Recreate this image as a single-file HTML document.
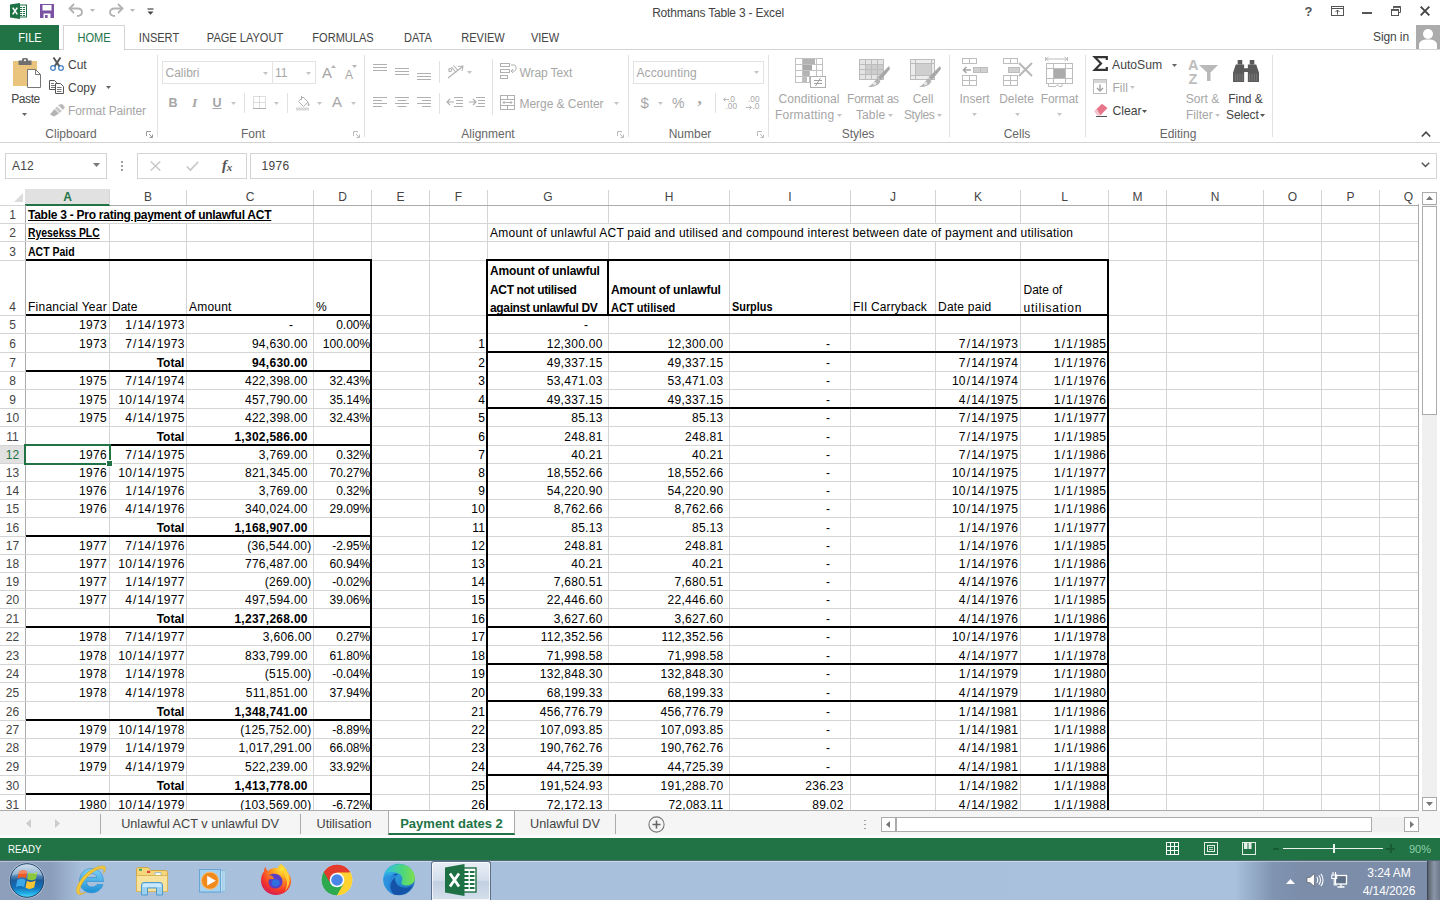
<!DOCTYPE html>
<html lang="en">
<head>
<meta charset="utf-8">
<title>Rothmans Table 3 - Excel</title>
<style>
*{box-sizing:border-box;margin:0;padding:0}
html,body{width:1440px;height:900px;overflow:hidden;background:#fff}
body{font-family:"Liberation Sans",sans-serif;font-size:12px;color:#444;position:relative}
.abs,.t,.g,.c,.r,.l,.hl,.vl,.th,.tv{position:absolute}
.t{white-space:pre;line-height:16px;height:16px}
svg{position:absolute;overflow:visible}
/* ribbon */
.dis{color:#a6a6a6}
.en{color:#444}
.glabel{position:absolute;top:127px;height:15px;line-height:15px;color:#666;font-size:12px;text-align:center;white-space:pre}
.gsep{position:absolute;top:55px;height:82px;width:1px;background:#e1e1e1}
.tab{position:absolute;top:30px;height:16px;line-height:16px;font-size:12px;color:#444;white-space:pre;transform:translateX(-50%) scaleX(.92)}
/* grid */
#sheet{position:absolute;left:0;top:189px;width:1419px;height:622px;overflow:hidden;background:#fff}
.hl{left:25px;height:1px;background:#d4d4d4;width:1394px}
.vl{top:0;width:1px;background:#d4d4d4;height:622px}
.th{height:2px;background:#000}
.tv{width:2px;background:#000}
.ch{position:absolute;top:1px;height:15px;line-height:15px;text-align:center;color:#444;font-size:12px}
.rh{position:absolute;left:0;width:25px;text-align:center;color:#444;font-size:12px;height:16px;line-height:16px}
.c{white-space:pre;height:16px;line-height:16px;color:#000;font-size:12px}
.r{white-space:pre;height:16px;line-height:16px;color:#000;font-size:12px;text-align:right}
.b{font-weight:bold;transform-origin:0 50%}
.n{letter-spacing:.28px}
i{font-style:normal;padding:0 .85px}
</style>
</head>
<body>
<!-- ===== title bar ===== -->
<div class="abs" id="titlebar" style="left:0;top:0;width:1440px;height:25px;background:#fff"></div>
<svg style="left:10px;top:3px" width="17" height="16" viewBox="0 0 17 16">
  <rect x="8" y="2" width="8.5" height="12" fill="#fff" stroke="#1e7145" stroke-width="1"/>
  <g stroke="#1e7145" stroke-width="1"><path d="M10 4.5h5M10 6.5h5M10 8.5h5M10 10.5h5M10 12.5h5"/><path d="M12.5 3v10" stroke="#fff" stroke-width=".8"/></g>
  <path d="M0 1.6 L10 0 V16 L0 14.4Z" fill="#1e7145"/>
  <path d="M2.7 4.6 L7.3 11.4 M7.3 4.6 L2.7 11.4" stroke="#fff" stroke-width="1.6"/>
</svg>
<svg style="left:40px;top:4px" width="14" height="14" viewBox="0 0 14 14">
  <rect x="0" y="0" width="14" height="14" fill="#7b51a3"/>
  <rect x="2.5" y="1" width="9" height="5.5" fill="#fff"/>
  <rect x="3.5" y="9.5" width="7" height="4.5" fill="#fff"/>
  <rect x="5" y="11" width="2.6" height="3" fill="#7b51a3"/>
</svg>
<svg style="left:68px;top:3px" width="16" height="15" viewBox="0 0 16 15">
  <path d="M1.5 5.5 H9.5 C12.5 5.5 14 7.3 14 9.3 C14 11.6 12.2 13 9 13" fill="none" stroke="#b2b2b2" stroke-width="1.8"/>
  <path d="M6 1 L1.5 5.5 L6 10" fill="none" stroke="#b2b2b2" stroke-width="1.8"/>
</svg>
<svg style="left:89.5px;top:9px" width="5" height="3" viewBox="0 0 5 3"><path d="M0 0H5L2.5 3Z" fill="#b8b8b8"/></svg>
<svg style="left:108px;top:3px" width="16" height="15" viewBox="0 0 16 15">
  <path d="M14.5 5.5 H6.5 C3.5 5.5 2 7.3 2 9.3 C2 11.6 3.8 13 7 13" fill="none" stroke="#b2b2b2" stroke-width="1.8"/>
  <path d="M10 1 L14.5 5.5 L10 10" fill="none" stroke="#b2b2b2" stroke-width="1.8"/>
</svg>
<svg style="left:129.5px;top:9px" width="5" height="3" viewBox="0 0 5 3"><path d="M0 0H5L2.5 3Z" fill="#b8b8b8"/></svg>
<svg style="left:147px;top:8px" width="7" height="7" viewBox="0 0 7 7"><path d="M0.5 1H6.5" stroke="#444" stroke-width="1.2"/><path d="M0.5 3.5H6.5L3.5 6.8Z" fill="#444"/></svg>
<div class="t" style="left:520px;width:396px;top:5px;text-align:center;font-size:12px;letter-spacing:-.2px;color:#444">Rothmans Table 3 - Excel</div>
<!-- window controls -->
<div class="t" style="left:1303.500px;top:3.500px;width:10px;text-align:center;font-size:13px;font-weight:bold;color:#555">?</div>
<svg style="left:1331px;top:6px" width="13" height="10" viewBox="0 0 13 10"><rect x=".5" y=".5" width="12" height="9" fill="none" stroke="#555"/><path d="M.5 2.500H12.500" stroke="#555"/><path d="M6.500 4v4.500M4.500 6L6.500 4L8.500 6" fill="none" stroke="#555" stroke-width="1"/></svg>
<div class="abs" style="left:1362px;top:12px;width:10px;height:2px;background:#555"></div>
<svg style="left:1391px;top:6px" width="10" height="10" viewBox="0 0 10 10"><path d="M2.500 2.500V.5H9.500V6.500H7.500" fill="none" stroke="#555"/><path d="M2.500 1.200H9.500" stroke="#555" stroke-width="1.400"/><rect x=".5" y="3.500" width="7" height="6" fill="none" stroke="#555"/><path d="M.5 4.200H7.500" stroke="#555" stroke-width="1.400"/></svg>
<svg style="left:1420px;top:6px" width="10" height="10" viewBox="0 0 10 10"><path d="M.7.7L9.3 9.3M9.3.7L.7 9.3" stroke="#444" stroke-width="1.9"/></svg>
<!-- ===== tab row ===== -->
<div class="abs" style="left:0;top:49px;width:1440px;height:1px;background:#d4d4d4"></div>
<div class="abs" style="left:0;top:25px;width:59px;height:25px;background:#217346"></div>
<div class="tab" style="left:29.5px;color:#fff">FILE</div>
<div class="abs" style="left:63px;top:25px;width:62px;height:25px;background:#fff;border:1px solid #d4d4d4;border-bottom:none"></div>
<div class="tab" style="left:93.5px;color:#217346">HOME</div>
<div class="tab" style="left:158.5px">INSERT</div>
<div class="tab" style="left:245px">PAGE LAYOUT</div>
<div class="tab" style="left:343px">FORMULAS</div>
<div class="tab" style="left:418px">DATA</div>
<div class="tab" style="left:482.5px">REVIEW</div>
<div class="tab" style="left:545px">VIEW</div>
<div class="t" style="left:1373px;top:29px;font-size:12px;color:#444;letter-spacing:-.1px">Sign in</div>
<div class="abs" style="left:1416px;top:25px;width:24px;height:24px;background:#ababab;overflow:hidden">
  <svg style="left:0;top:0" width="24" height="24" viewBox="0 0 24 24"><circle cx="12" cy="9" r="5" fill="#fff"/><path d="M3 24V20C3 16.5 6 14.5 12 14.5S21 16.5 21 20V24Z" fill="#fff"/></svg>
</div>
<!-- ===== ribbon ===== -->
<div class="abs" style="left:0;top:142px;width:1440px;height:1px;background:#d4d4d4"></div>
<div class="gsep" style="left:157px"></div><div class="gsep" style="left:364px"></div><div class="gsep" style="left:628px"></div><div class="gsep" style="left:768px"></div><div class="gsep" style="left:949px"></div><div class="gsep" style="left:1085px"></div><div class="gsep" style="left:1272px"></div>
<div class="glabel" style="left:31px;width:80px">Clipboard</div>
<div class="glabel" style="left:213px;width:80px">Font</div>
<div class="glabel" style="left:448px;width:80px">Alignment</div>
<div class="glabel" style="left:650px;width:80px">Number</div>
<div class="glabel" style="left:818px;width:80px">Styles</div>
<div class="glabel" style="left:977px;width:80px">Cells</div>
<div class="glabel" style="left:1138px;width:80px">Editing</div>
<!-- dialog launchers -->
<svg class="dl" style="left:146px;top:131px" width="7" height="7" viewBox="0 0 7 7"><path d="M.5 5V.5H5" fill="none" stroke="#999"/><path d="M3 3L6 6M6.5 3.5V6.5H3.5" fill="none" stroke="#999"/></svg>
<svg class="dl" style="left:353px;top:131px" width="7" height="7" viewBox="0 0 7 7"><path d="M.5 5V.5H5" fill="none" stroke="#bbb"/><path d="M3 3L6 6M6.5 3.5V6.5H3.5" fill="none" stroke="#bbb"/></svg>
<svg class="dl" style="left:617px;top:131px" width="7" height="7" viewBox="0 0 7 7"><path d="M.5 5V.5H5" fill="none" stroke="#bbb"/><path d="M3 3L6 6M6.5 3.5V6.5H3.5" fill="none" stroke="#bbb"/></svg>
<svg class="dl" style="left:757px;top:131px" width="7" height="7" viewBox="0 0 7 7"><path d="M.5 5V.5H5" fill="none" stroke="#bbb"/><path d="M3 3L6 6M6.5 3.5V6.5H3.5" fill="none" stroke="#bbb"/></svg>

<!-- Clipboard -->
<svg style="left:13px;top:57px" width="29" height="31" viewBox="0 0 29 31">
  <rect x="0" y="4" width="24" height="25" fill="#eac47c"/>
  <rect x="5.500" y="3.500" width="13" height="4.500" fill="#6f6f6f"/><rect x="9" y="1" width="6" height="4" rx="1.500" fill="#6f6f6f"/><circle cx="12" cy="3.200" r="1" fill="#fff"/>
  <path d="M14.500 12.500H22.500L27.500 17.500V30.500H14.500Z" fill="#fff" stroke="#777" stroke-width="1"/><path d="M22.500 12.500V17.500H27.500" fill="none" stroke="#777"/>
</svg>
<div class="t en" style="left:5px;width:41px;top:91px;text-align:center;letter-spacing:-.4px">Paste</div>
<svg style="left:22px;top:113px" width="5" height="3" viewBox="0 0 5 3"><path d="M0 0H5L2.5 3Z" fill="#666"/></svg>
<!-- cut -->
<svg style="left:50px;top:57px" width="14" height="14" viewBox="0 0 14 14">
  <path d="M3.500 .5L9.600 9.600M10.500 .5L4.400 9.600" stroke="#555" stroke-width="1.900" fill="none"/>
  <circle cx="3" cy="11" r="2.3" fill="none" stroke="#4a82c3" stroke-width="1.300"/><circle cx="11" cy="11" r="2.3" fill="none" stroke="#4a82c3" stroke-width="1.300"/>
</svg>
<div class="t en" style="left:68px;top:57px;font-size:12px">Cut</div>
<!-- copy -->
<svg style="left:49px;top:80px" width="15" height="14" viewBox="0 0 15 14">
  <path d="M.5 .5H5.5L7.5 2.5V9.5H.5Z" fill="#fff" stroke="#555"/><path d="M2 3.5H5M2 5.5H6M2 7.5H6" stroke="#555" stroke-width=".8"/>
  <path d="M6.5 3.5H11.5L14.5 6.5V13.5H6.5Z" fill="#fff" stroke="#555"/><path d="M8 7.5H12.5M8 9.5H12.5M8 11.5H12.5" stroke="#555" stroke-width=".8"/>
</svg>
<div class="t en" style="left:68px;top:80px;font-size:12px">Copy</div>
<svg style="left:105.5px;top:86px" width="5" height="3" viewBox="0 0 5 3"><path d="M0 0H5L2.5 3Z" fill="#666"/></svg>
<!-- format painter -->
<svg style="left:50px;top:104px" width="15" height="13" viewBox="0 0 15 13">
  <path d="M8 1L12 0L15 3L13 6Z" fill="#b9b9b9"/><path d="M7 2.5L12 7L9.5 9L5 4.5Z" fill="#c8c8c8"/><path d="M4.5 5L9 9.5L4 12.5L0 10.5Z" fill="#b4b4b4"/>
</svg>
<div class="t dis" style="left:68px;top:103px;letter-spacing:-.1px">Format Painter</div>

<!-- Font -->
<div class="abs" style="left:162px;top:61px;width:111px;height:23px;border:1px solid #e3e3e3;background:#fff"></div>
<div class="abs" style="left:272px;top:61px;width:44px;height:23px;border:1px solid #e3e3e3;background:#fff"></div>
<div class="t dis" style="left:165.5px;top:65px">Calibri</div>
<div class="t dis" style="left:275px;top:65px">11</div>
<svg style="left:262.5px;top:71.5px" width="5" height="3" viewBox="0 0 5 3"><path d="M0 0H5L2.5 3Z" fill="#c4c4c4"/></svg>
<svg style="left:305.5px;top:71.5px" width="5" height="3" viewBox="0 0 5 3"><path d="M0 0H5L2.5 3Z" fill="#c4c4c4"/></svg>
<div class="t dis" style="left:322px;top:65px;font-size:15px">A</div>
<svg style="left:330.5px;top:64.5px" width="5" height="3" viewBox="0 0 5 3"><path d="M0 3H5L2.5 0Z" fill="#b4b4b4"/></svg>
<div class="t dis" style="left:345px;top:67px;font-size:12px">A</div>
<svg style="left:352px;top:64.5px" width="5" height="3" viewBox="0 0 5 3"><path d="M0 0H5L2.5 3Z" fill="#b4b4b4"/></svg>
<div class="t dis" style="left:168.5px;top:95px;font-weight:bold;font-size:12.5px">B</div>
<div class="t dis" style="left:192px;top:95px;font-style:italic;font-weight:bold;font-family:'Liberation Serif',serif;font-size:13.5px">I</div>
<div class="t dis" style="left:212.5px;top:95px;font-size:12.5px;font-weight:bold;text-decoration:underline">U</div>
<svg style="left:231px;top:101.5px" width="5" height="3" viewBox="0 0 5 3"><path d="M0 0H5L2.5 3Z" fill="#c4c4c4"/></svg>
<div class="abs" style="left:244px;top:93px;width:1px;height:20px;background:#e1e1e1"></div>
<svg style="left:253px;top:96px" width="13" height="13" viewBox="0 0 13 13"><rect x=".5" y=".5" width="12" height="12" fill="none" stroke="#bdbdbd" stroke-dasharray="1 1"/><path d="M6.500 .5V12.500M.5 6.500H12.500" stroke="#bdbdbd" stroke-dasharray="1 1"/><path d="M0 12.500H13" stroke="#b0b0b0"/></svg>
<svg style="left:273.5px;top:101.5px" width="5" height="3" viewBox="0 0 5 3"><path d="M0 0H5L2.5 3Z" fill="#c4c4c4"/></svg>
<div class="abs" style="left:287px;top:93px;width:1px;height:20px;background:#e1e1e1"></div>
<svg style="left:295px;top:95px" width="16" height="16" viewBox="0 0 16 16">
  <path d="M3.5 6.5L8 2L13 7L8.5 11.5Z" fill="#fff" stroke="#b0b0b0"/><path d="M6.5 .8V5" stroke="#b0b0b0"/><path d="M13 7C14.5 8.8 15 9.8 14.2 10.8C13.4 11.5 12.2 10.8 13 7Z" fill="#b0b0b0"/>
  <rect x="1" y="12.5" width="13" height="3" fill="#d9d9d9"/>
</svg>
<svg style="left:317px;top:101.5px" width="5" height="3" viewBox="0 0 5 3"><path d="M0 0H5L2.5 3Z" fill="#c4c4c4"/></svg>
<div class="t dis" style="left:332px;top:94px;font-size:15px">A</div>
<svg style="left:350.5px;top:101.5px" width="5" height="3" viewBox="0 0 5 3"><path d="M0 0H5L2.5 3Z" fill="#c4c4c4"/></svg>

<!-- Alignment -->
<svg style="left:373px;top:63px" width="60" height="20" viewBox="0 0 60 20"><g stroke="#b0b0b0" stroke-width="1">
 <path d="M0 1.5H14M0 4.5H14M0 7.5H14"/><path d="M22 5.5H36M22 8.5H36M22 11.5H36"/><path d="M44 10.5H58M44 13.5H58M44 16.5H58"/></g></svg>
<div class="abs" style="left:439px;top:61px;width:1px;height:22px;background:#e1e1e1"></div>
<svg style="left:447px;top:64px" width="18" height="15" viewBox="0 0 18 15"><g fill="none" stroke="#b0b0b0" stroke-width="1.1">
 <path d="M1 14L15 3"/><path d="M11 2.5L16 2L15 7"/><path d="M2.5 4.5C1 6 2 8 3.5 7.5C5 7 5 5 3.5 4.5ZM4.5 3L9 8.5M6.5 1.5L11 6.5"/></g></svg>
<svg style="left:467px;top:70.5px" width="5" height="3" viewBox="0 0 5 3"><path d="M0 0H5L2.5 3Z" fill="#c4c4c4"/></svg>
<div class="abs" style="left:492px;top:59px;width:1px;height:56px;background:#e1e1e1"></div>
<svg style="left:500px;top:63px" width="17" height="16" viewBox="0 0 17 16"><g fill="none" stroke="#b0b0b0" stroke-width="1">
 <rect x=".5" y=".5" width="9" height="3"/><rect x=".5" y="6.5" width="9" height="3"/><rect x=".5" y="12.5" width="7" height="3"/>
 <path d="M11 2H14.5C16.5 2 16.5 8 14.5 8H11.5M13 6L11 8L13 10"/></g></svg>
<div class="t dis" style="left:519.5px;top:64.5px;letter-spacing:-.1px">Wrap Text</div>
<svg style="left:373px;top:97px" width="60" height="12" viewBox="0 0 60 12"><g stroke="#b0b0b0" stroke-width="1">
 <path d="M0 .5H14M0 3.5H9M0 6.5H14M0 9.5H9"/><path d="M22 .5H36M24.5 3.5H33.5M22 6.5H36M24.5 9.5H33.5"/><path d="M44 .5H58M49 3.5H58M44 6.5H58M49 9.5H58"/></g></svg>
<div class="abs" style="left:439px;top:93px;width:1px;height:21px;background:#e1e1e1"></div>
<svg style="left:447px;top:97px" width="39" height="12" viewBox="0 0 39 12"><g stroke="#b0b0b0" stroke-width="1" fill="none">
 <path d="M7 .5H16M9 3.5H16M9 6.5H16M7 9.5H16"/><path d="M0 5H7M3 2L0 5L3 8" stroke-width="1.2"/>
 <path d="M29 .5H38M31 3.5H38M31 6.5H38M29 9.5H38"/><path d="M22 5H29M26 2L29 5L26 8" stroke-width="1.2"/></g></svg>
<svg style="left:500px;top:95px" width="16" height="15" viewBox="0 0 16 15"><g fill="none" stroke="#b0b0b0" stroke-width="1">
 <rect x=".5" y=".5" width="14" height="14"/><path d="M.5 4.5H14.5M.5 10.5H14.5M7.5 .5V4.5M7.5 10.5V14.5"/><path d="M3 7.5H12M4.5 6L3 7.5L4.5 9M10.5 6L12 7.5L10.5 9"/></g></svg>
<div class="t dis" style="left:519.5px;top:95.5px;letter-spacing:-.05px">Merge &amp; Center</div>
<svg style="left:614px;top:101.5px" width="5" height="3" viewBox="0 0 5 3"><path d="M0 0H5L2.5 3Z" fill="#c4c4c4"/></svg>

<!-- Number -->
<div class="abs" style="left:633px;top:61px;width:131px;height:23px;border:1px solid #e3e3e3;background:#fff"></div>
<div class="t dis" style="left:636.5px;top:64.5px;letter-spacing:.1px">Accounting</div>
<svg style="left:754px;top:71px" width="5" height="3" viewBox="0 0 5 3"><path d="M0 0H5L2.5 3Z" fill="#c4c4c4"/></svg>
<div class="t dis" style="left:640.500px;top:95px;font-size:15px">$</div>
<svg style="left:658px;top:101.5px" width="5" height="3" viewBox="0 0 5 3"><path d="M0 0H5L2.5 3Z" fill="#c4c4c4"/></svg>
<div class="t dis" style="left:672px;top:95px;font-size:14px">%</div>
<div class="t dis" style="left:697.500px;top:90.500px;font-size:17px;font-weight:bold;font-family:'Liberation Serif',serif">,</div>
<div class="abs" style="left:715px;top:93px;width:1px;height:20px;background:#e1e1e1"></div>
<div class="t dis" style="left:728px;top:94.500px;font-size:8.300px;line-height:8px;height:8px;color:#a9a9a9">.0</div>
<div class="t dis" style="left:725.500px;top:102px;font-size:8.300px;line-height:8px;height:8px;color:#a9a9a9">.00</div>
<svg style="left:722.500px;top:97px" width="6" height="5" viewBox="0 0 6 5"><path d="M6 2.5H1M2.5 .5L.5 2.5L2.5 4.5" fill="none" stroke="#b0b0b0" stroke-width=".9"/></svg>
<div class="t dis" style="left:748px;top:94.500px;font-size:8.300px;line-height:8px;height:8px;color:#a9a9a9">.00</div>
<div class="t dis" style="left:752.500px;top:102px;font-size:8.300px;line-height:8px;height:8px;color:#a9a9a9">.0</div>
<svg style="left:745.500px;top:104.500px" width="6" height="5" viewBox="0 0 6 5"><path d="M0 2.5H5M3.5 .5L5.5 2.5L3.5 4.5" fill="none" stroke="#b0b0b0" stroke-width=".9"/></svg>
<!-- Styles -->
<svg style="left:795px;top:58px" width="31" height="30" viewBox="0 0 31 30">
  <g fill="none" stroke="#c2c2c2" stroke-width="1"><rect x=".5" y=".5" width="27" height="24"/><path d="M.5 6.5H27.5M.5 12.5H27.5M.5 18.5H27.5M7.5 .5V24.5M14.5 .5V24.5M21.5 .5V24.5"/></g>
  <rect x="8" y="1" width="12" height="5" fill="#b3b3b3"/><rect x="8" y="7" width="9" height="5" fill="#a9a9a9"/><rect x="8" y="13" width="6" height="5" fill="#b3b3b3"/><rect x="8" y="19" width="4" height="5" fill="#bdbdbd"/>
  <rect x="15.5" y="18.500" width="15" height="11" fill="#fff" stroke="#b0b0b0"/><path d="M19 22.5H27M19 25.500H27M25.500 20L20.5 28" stroke="#a0a0a0" stroke-width="1" fill="none"/>
</svg>
<div class="t dis" style="left:768px;width:82px;top:91px;text-align:center;letter-spacing:.1px">Conditional</div>
<div class="t dis" style="left:775px;top:107px;letter-spacing:.2px">Formatting</div>
<svg style="left:837px;top:113.500px" width="5" height="3" viewBox="0 0 5 3"><path d="M0 0H5L2.5 3Z" fill="#c4c4c4"/></svg>
<svg style="left:859px;top:59px" width="31" height="29" viewBox="0 0 31 29">
  <rect x="1" y="1" width="24" height="20" fill="#e4e4e4"/><rect x="7" y="6" width="18" height="10" fill="#cdcdcd"/>
  <g fill="none" stroke="#bcbcbc" stroke-width="1"><rect x=".5" y=".5" width="24" height="20"/><path d="M.5 5.5H24.5M.5 10.5H24.5M.5 15.500H24.5M6.500 .5V20.5M12.500 .5V20.5M18.500 .5V20.5"/></g>
  <path d="M30 7L31 10L22 21L18.500 18.500Z" fill="#a8a8a8"/><path d="M18 19L21.500 22C20 26 16 28 9 28C13 26 15 23 18 19Z" fill="#b4b4b4"/><circle cx="15.500" cy="24.500" r="1.800" fill="#e6e6e6"/>
</svg>
<div class="t dis" style="left:838px;width:70px;top:91px;text-align:center;letter-spacing:-.25px">Format as</div>
<div class="t dis" style="left:856px;top:107px;letter-spacing:.1px">Table</div>
<svg style="left:887.500px;top:113.500px" width="5" height="3" viewBox="0 0 5 3"><path d="M0 0H5L2.5 3Z" fill="#c4c4c4"/></svg>
<svg style="left:910px;top:59px" width="31" height="29" viewBox="0 0 31 29">
  <rect x="1" y="1" width="24" height="20" fill="#ececec"/><rect x="6" y="5" width="15" height="11" fill="#cfcfcf"/>
  <g fill="none" stroke="#bcbcbc" stroke-width="1"><rect x=".5" y=".5" width="24" height="20"/><path d="M.5 4.500H24.5M.5 16.500H24.5M5.500 .5V20.5M21.500 .5V20.5"/></g>
  <path d="M30 7L31 10L22 21L18.500 18.500Z" fill="#a8a8a8"/><path d="M18 19L21.500 22C20 26 16 28 9 28C13 26 15 23 18 19Z" fill="#b4b4b4"/><circle cx="15.500" cy="24.500" r="1.800" fill="#e6e6e6"/>
</svg>
<div class="t dis" style="left:898px;width:50px;top:91px;text-align:center">Cell</div>
<div class="t dis" style="left:904px;top:107px;letter-spacing:-.4px">Styles</div>
<svg style="left:937px;top:113.500px" width="5" height="3" viewBox="0 0 5 3"><path d="M0 0H5L2.5 3Z" fill="#c4c4c4"/></svg>

<!-- Cells -->
<svg style="left:961px;top:58px" width="28" height="28" viewBox="0 0 28 28"><g fill="none" stroke="#bdbdbd" stroke-width="1">
  <rect x="1.500" y=".5" width="14" height="5"/><path d="M8.500 .5V5.500"/>
  <rect x="12.500" y="9.500" width="14" height="5" fill="#d0d0d0"/><path d="M19.500 9.500V14.500"/>
  <rect x="1.500" y="17.500" width="14" height="10"/><path d="M1.500 22.500H15.500M8.500 17.500V27.500"/></g>
  <path d="M10 12H2.500M5.500 9L2.500 12L5.500 15" fill="none" stroke="#a6a6a6" stroke-width="1.600"/>
</svg>
<div class="t dis" style="left:949px;width:51px;top:91px;text-align:center">Insert</div>
<svg style="left:972px;top:112.500px" width="5" height="3" viewBox="0 0 5 3"><path d="M0 0H5L2.5 3Z" fill="#c4c4c4"/></svg>
<svg style="left:1002px;top:58px" width="31" height="28" viewBox="0 0 31 28"><g fill="none" stroke="#bdbdbd" stroke-width="1">
  <rect x="1.500" y=".5" width="14" height="5"/><path d="M8.500 .5V5.500"/>
  <rect x="6.500" y="9.500" width="11" height="5" fill="#d0d0d0"/>
  <rect x="1.500" y="17.500" width="14" height="10"/><path d="M1.500 22.500H15.500M8.500 17.500V27.500"/></g>
  <path d="M17 5L30 18M30 5L17 18" fill="none" stroke="#b8b8b8" stroke-width="2"/>
</svg>
<div class="t dis" style="left:991px;width:51px;top:91px;text-align:center">Delete</div>
<svg style="left:1014.500px;top:112.500px" width="5" height="3" viewBox="0 0 5 3"><path d="M0 0H5L2.5 3Z" fill="#c4c4c4"/></svg>
<svg style="left:1045px;top:56px" width="29" height="32" viewBox="0 0 29 32"><g fill="none" stroke="#bdbdbd" stroke-width="1">
  <path d="M.5 1V5M22.500 1V5M1 3H22M3.500 1L1 3L3.500 5M19.500 1L22 3L19.500 5"/>
  <rect x="1.500" y="7.500" width="26" height="20"/><path d="M1.500 12.500H27.500M1.500 22.500H27.500M8.500 7.500V27.500M20.500 7.500V27.500"/>
  <path d="M3.500 27.500V30.500H11L12.500 28.500L14 30.500H17V27.500"/></g>
  <rect x="9" y="13" width="11" height="9" fill="#ababab"/>
</svg>
<div class="t dis" style="left:1034px;width:51px;top:91px;text-align:center;letter-spacing:-.1px">Format</div>
<svg style="left:1057px;top:112.500px" width="5" height="3" viewBox="0 0 5 3"><path d="M0 0H5L2.5 3Z" fill="#c4c4c4"/></svg>

<!-- Editing -->
<svg style="left:1093px;top:56px" width="15" height="15" viewBox="0 0 15 15"><path d="M13.800 4V1.200H1.800L8 7.500L1.800 13.800H13.800V11" fill="none" stroke="#333" stroke-width="2.200"/></svg>
<div class="t en" style="left:1112px;top:57px;font-size:12.200px">AutoSum</div>
<svg style="left:1172px;top:63.500px" width="5" height="3" viewBox="0 0 5 3"><path d="M0 0H5L2.5 3Z" fill="#666"/></svg>
<svg style="left:1093px;top:79px" width="15" height="16" viewBox="0 0 15 16"><rect x=".5" y=".5" width="13" height="14" fill="#fff" stroke="#bdbdbd"/><rect x="1" y="1" width="12" height="3" fill="#d6d6d6"/><path d="M7 5.500V12M4 9L7 12L10 9" fill="none" stroke="#a6a6a6" stroke-width="1.500"/></svg>
<div class="t dis" style="left:1112.500px;top:79.500px">Fill</div>
<svg style="left:1129.500px;top:86px" width="5" height="3" viewBox="0 0 5 3"><path d="M0 0H5L2.5 3Z" fill="#c4c4c4"/></svg>
<svg style="left:1093px;top:103px" width="16" height="14" viewBox="0 0 16 14"><path d="M1.500 8L9 .8L14.500 5L7.500 12.200H4.500Z" fill="#e8768a"/><path d="M1.500 8L4.500 12.200H7.500L3.800 6Z" fill="#f4c6cd"/><path d="M3 13.500H14" stroke="#555" stroke-width="1"/></svg>
<div class="t en" style="left:1112.500px;top:103px;font-size:12.200px">Clear</div>
<svg style="left:1142px;top:109.500px" width="5" height="3" viewBox="0 0 5 3"><path d="M0 0H5L2.5 3Z" fill="#555"/></svg>
<div class="t dis" style="left:1188px;top:58px;font-size:14.500px;font-weight:bold;line-height:14px;height:14px;color:#bdbdbd">A</div>
<div class="t dis" style="left:1188.500px;top:71.500px;font-size:14.500px;font-weight:bold;line-height:14px;height:14px;color:#bdbdbd">Z</div>
<svg style="left:1199px;top:64px" width="19" height="18" viewBox="0 0 19 18"><path d="M0 1H19L11.500 8.500V17H8V8.500Z" fill="#b9b9b9"/></svg>
<div class="t dis" style="left:1177px;width:51px;top:91px;text-align:center">Sort &amp;</div>
<div class="t dis" style="left:1186px;top:107px">Filter</div>
<svg style="left:1214.500px;top:113.500px" width="5" height="3" viewBox="0 0 5 3"><path d="M0 0H5L2.5 3Z" fill="#c4c4c4"/></svg>
<svg style="left:1233px;top:60px" width="26" height="22" viewBox="0 0 28 24" preserveAspectRatio="none"><g fill="#5a5a5a">
  <rect x="5" y="0" width="5" height="5"/><rect x="18" y="0" width="5" height="5"/>
  <path d="M3 5H12V9H16V5H25L28 14V24H16V13H12V24H0V14Z"/></g>
  <path d="M2.500 15V23M5 15V23M7.500 15V23M10 15V23M18 15V23M20.500 15V23M23 15V23M25.500 15V23" stroke="#8a8a8a" stroke-width=".7"/>
</svg>
<div class="t en" style="left:1220px;width:51px;top:91px;text-align:center">Find &amp;</div>
<div class="t en" style="left:1226px;top:107px;letter-spacing:-.1px">Select</div>
<svg style="left:1260px;top:113.500px" width="5" height="3" viewBox="0 0 5 3"><path d="M0 0H5L2.5 3Z" fill="#555"/></svg>
<svg style="left:1421px;top:131px" width="10" height="6" viewBox="0 0 10 6"><path d="M.8 5.500L5 1.200L9.200 5.500" fill="none" stroke="#444" stroke-width="1.600"/></svg>

<!-- ===== formula bar ===== -->
<div class="abs" style="left:5px;top:153px;width:102px;height:26px;border:1px solid #d4d4d4;background:#fff"></div>
<div class="t" style="left:12px;top:158px;color:#444;font-size:12px;letter-spacing:.2px">A12</div>
<svg style="left:93px;top:163px" width="7" height="4" viewBox="0 0 7 4"><path d="M0 0H7L3.500 4Z" fill="#777"/></svg>
<div class="abs" style="left:121px;top:161px;width:1.500px;height:1.500px;background:#a0a0a0;box-shadow:0 4px 0 #a0a0a0,0 8px 0 #a0a0a0"></div>
<div class="abs" style="left:137px;top:153px;width:110px;height:26px;border:1px solid #d4d4d4;background:#fff"></div>
<svg style="left:150px;top:161px" width="11" height="10" viewBox="0 0 11 10"><path d="M.7.5L10.300 9.500M10.300.5L.7 9.500" stroke="#c6c6c6" stroke-width="1.300"/></svg>
<svg style="left:186px;top:161px" width="13" height="10" viewBox="0 0 13 10"><path d="M.8 5.500L4.500 9L12.200.8" fill="none" stroke="#c6c6c6" stroke-width="1.600"/></svg>
<div class="t" style="left:222px;top:156px;font-family:'Liberation Serif',serif;font-style:italic;font-weight:bold;font-size:15px;color:#555;line-height:18px;height:18px;letter-spacing:-.3px">f<span style="font-size:11px;vertical-align:-1px">x</span></div>
<div class="abs" style="left:250px;top:153px;width:1187px;height:26px;border:1px solid #d4d4d4;background:#fff"></div>
<div class="t" style="left:261.500px;top:158px;color:#444;font-size:12px;letter-spacing:.3px">1976</div>
<svg style="left:1421px;top:162px" width="9" height="6" viewBox="0 0 9 6"><path d="M.8.8L4.500 4.500L8.200.8" fill="none" stroke="#555" stroke-width="1.500"/></svg>
<!-- ===== sheet ===== -->
<div id="sheet">
<div class="abs" style="left:25px;top:0;width:85px;height:15px;background:#e1e1e1"></div>
<div class="abs" style="left:25px;top:15px;width:85px;height:2px;background:#217346"></div>
<svg style="left:14px;top:4px" width="9" height="9" viewBox="0 0 9 9"><path d="M9 0V9H0Z" fill="#dcdcdc"/></svg>
<div class="abs" style="left:0;top:16px;width:25px;height:1px;background:#d4d4d4"></div>
<div class="abs" style="left:110px;top:16px;width:1309px;height:1px;background:#ababab"></div>
<div class="ch" style="left:26px;width:83px;color:#217346;font-weight:bold">A</div>
<div class="abs" style="left:109px;top:1px;width:1px;height:15px;background:#d4d4d4"></div>
<div class="ch" style="left:110px;width:76px">B</div>
<div class="abs" style="left:186px;top:1px;width:1px;height:15px;background:#d4d4d4"></div>
<div class="ch" style="left:187px;width:126px">C</div>
<div class="abs" style="left:313px;top:1px;width:1px;height:15px;background:#d4d4d4"></div>
<div class="ch" style="left:314px;width:57px">D</div>
<div class="abs" style="left:371px;top:1px;width:1px;height:15px;background:#d4d4d4"></div>
<div class="ch" style="left:372px;width:57px">E</div>
<div class="abs" style="left:429px;top:1px;width:1px;height:15px;background:#d4d4d4"></div>
<div class="ch" style="left:430px;width:57px">F</div>
<div class="abs" style="left:487px;top:1px;width:1px;height:15px;background:#d4d4d4"></div>
<div class="ch" style="left:488px;width:120px">G</div>
<div class="abs" style="left:608px;top:1px;width:1px;height:15px;background:#d4d4d4"></div>
<div class="ch" style="left:609px;width:120px">H</div>
<div class="abs" style="left:729px;top:1px;width:1px;height:15px;background:#d4d4d4"></div>
<div class="ch" style="left:730px;width:120px">I</div>
<div class="abs" style="left:850px;top:1px;width:1px;height:15px;background:#d4d4d4"></div>
<div class="ch" style="left:851px;width:84px">J</div>
<div class="abs" style="left:935px;top:1px;width:1px;height:15px;background:#d4d4d4"></div>
<div class="ch" style="left:936px;width:84px">K</div>
<div class="abs" style="left:1020px;top:1px;width:1px;height:15px;background:#d4d4d4"></div>
<div class="ch" style="left:1021px;width:87px">L</div>
<div class="abs" style="left:1108px;top:1px;width:1px;height:15px;background:#d4d4d4"></div>
<div class="ch" style="left:1109px;width:57px">M</div>
<div class="abs" style="left:1166px;top:1px;width:1px;height:15px;background:#d4d4d4"></div>
<div class="ch" style="left:1167px;width:96px">N</div>
<div class="abs" style="left:1263px;top:1px;width:1px;height:15px;background:#d4d4d4"></div>
<div class="ch" style="left:1264px;width:57px">O</div>
<div class="abs" style="left:1321px;top:1px;width:1px;height:15px;background:#d4d4d4"></div>
<div class="ch" style="left:1322px;width:57px">P</div>
<div class="abs" style="left:1379px;top:1px;width:1px;height:15px;background:#d4d4d4"></div>
<div class="ch" style="left:1380px;width:57px">Q</div>
<div class="abs" style="left:25px;top:16px;width:1px;height:606px;background:#ababab"></div>
<div class="abs" style="left:109px;top:34px;width:1px;height:588px;background:#d4d4d4"></div>
<div class="abs" style="left:186px;top:34px;width:1px;height:588px;background:#d4d4d4"></div>
<div class="abs" style="left:313px;top:17px;width:1px;height:605px;background:#d4d4d4"></div>
<div class="abs" style="left:371px;top:17px;width:1px;height:605px;background:#d4d4d4"></div>
<div class="abs" style="left:429px;top:17px;width:1px;height:605px;background:#d4d4d4"></div>
<div class="abs" style="left:487px;top:17px;width:1px;height:605px;background:#d4d4d4"></div>
<div class="abs" style="left:608px;top:17px;width:1px;height:18px;background:#d4d4d4"></div>
<div class="abs" style="left:608px;top:52px;width:1px;height:570px;background:#d4d4d4"></div>
<div class="abs" style="left:729px;top:17px;width:1px;height:18px;background:#d4d4d4"></div>
<div class="abs" style="left:729px;top:52px;width:1px;height:570px;background:#d4d4d4"></div>
<div class="abs" style="left:850px;top:17px;width:1px;height:18px;background:#d4d4d4"></div>
<div class="abs" style="left:850px;top:52px;width:1px;height:570px;background:#d4d4d4"></div>
<div class="abs" style="left:935px;top:17px;width:1px;height:18px;background:#d4d4d4"></div>
<div class="abs" style="left:935px;top:52px;width:1px;height:570px;background:#d4d4d4"></div>
<div class="abs" style="left:1020px;top:17px;width:1px;height:18px;background:#d4d4d4"></div>
<div class="abs" style="left:1020px;top:52px;width:1px;height:570px;background:#d4d4d4"></div>
<div class="abs" style="left:1108px;top:17px;width:1px;height:605px;background:#d4d4d4"></div>
<div class="abs" style="left:1166px;top:17px;width:1px;height:605px;background:#d4d4d4"></div>
<div class="abs" style="left:1263px;top:17px;width:1px;height:605px;background:#d4d4d4"></div>
<div class="abs" style="left:1321px;top:17px;width:1px;height:605px;background:#d4d4d4"></div>
<div class="abs" style="left:1379px;top:17px;width:1px;height:605px;background:#d4d4d4"></div>
<div class="hl" style="top:34px"></div>
<div class="hl" style="top:52px"></div>
<div class="hl" style="top:71px"></div>
<div class="hl" style="top:126px"></div>
<div class="hl" style="top:144px"></div>
<div class="hl" style="top:163px"></div>
<div class="hl" style="top:182px"></div>
<div class="hl" style="top:200px"></div>
<div class="hl" style="top:219px"></div>
<div class="hl" style="top:237px"></div>
<div class="hl" style="top:256px"></div>
<div class="hl" style="top:274px"></div>
<div class="hl" style="top:292px"></div>
<div class="hl" style="top:310px"></div>
<div class="hl" style="top:328px"></div>
<div class="hl" style="top:347px"></div>
<div class="hl" style="top:365px"></div>
<div class="hl" style="top:383px"></div>
<div class="hl" style="top:401px"></div>
<div class="hl" style="top:419px"></div>
<div class="hl" style="top:438px"></div>
<div class="hl" style="top:456px"></div>
<div class="hl" style="top:475px"></div>
<div class="hl" style="top:493px"></div>
<div class="hl" style="top:512px"></div>
<div class="hl" style="top:531px"></div>
<div class="hl" style="top:549px"></div>
<div class="hl" style="top:567px"></div>
<div class="hl" style="top:586px"></div>
<div class="hl" style="top:605px"></div>
<div class="abs" style="left:0;top:34px;width:25px;height:1px;background:#d4d4d4"></div>
<div class="rh" style="top:18px">1</div>
<div class="abs" style="left:0;top:52px;width:25px;height:1px;background:#d4d4d4"></div>
<div class="rh" style="top:36px">2</div>
<div class="abs" style="left:0;top:71px;width:25px;height:1px;background:#d4d4d4"></div>
<div class="rh" style="top:55px">3</div>
<div class="abs" style="left:0;top:126px;width:25px;height:1px;background:#d4d4d4"></div>
<div class="rh" style="top:110px">4</div>
<div class="abs" style="left:0;top:144px;width:25px;height:1px;background:#d4d4d4"></div>
<div class="rh" style="top:128px">5</div>
<div class="abs" style="left:0;top:163px;width:25px;height:1px;background:#d4d4d4"></div>
<div class="rh" style="top:147px">6</div>
<div class="abs" style="left:0;top:182px;width:25px;height:1px;background:#d4d4d4"></div>
<div class="rh" style="top:166px">7</div>
<div class="abs" style="left:0;top:200px;width:25px;height:1px;background:#d4d4d4"></div>
<div class="rh" style="top:184px">8</div>
<div class="abs" style="left:0;top:219px;width:25px;height:1px;background:#d4d4d4"></div>
<div class="rh" style="top:203px">9</div>
<div class="abs" style="left:0;top:237px;width:25px;height:1px;background:#d4d4d4"></div>
<div class="rh" style="top:221px">10</div>
<div class="abs" style="left:0;top:256px;width:25px;height:1px;background:#d4d4d4"></div>
<div class="rh" style="top:240px">11</div>
<div class="abs" style="left:0;top:257px;width:24px;height:17px;background:#e1e1e1"></div>
<div class="abs" style="left:0;top:274px;width:25px;height:1px;background:#d4d4d4"></div>
<div class="rh" style="top:258px;color:#217346">12</div>
<div class="abs" style="left:0;top:292px;width:25px;height:1px;background:#d4d4d4"></div>
<div class="rh" style="top:276px">13</div>
<div class="abs" style="left:0;top:310px;width:25px;height:1px;background:#d4d4d4"></div>
<div class="rh" style="top:294px">14</div>
<div class="abs" style="left:0;top:328px;width:25px;height:1px;background:#d4d4d4"></div>
<div class="rh" style="top:312px">15</div>
<div class="abs" style="left:0;top:347px;width:25px;height:1px;background:#d4d4d4"></div>
<div class="rh" style="top:331px">16</div>
<div class="abs" style="left:0;top:365px;width:25px;height:1px;background:#d4d4d4"></div>
<div class="rh" style="top:349px">17</div>
<div class="abs" style="left:0;top:383px;width:25px;height:1px;background:#d4d4d4"></div>
<div class="rh" style="top:367px">18</div>
<div class="abs" style="left:0;top:401px;width:25px;height:1px;background:#d4d4d4"></div>
<div class="rh" style="top:385px">19</div>
<div class="abs" style="left:0;top:419px;width:25px;height:1px;background:#d4d4d4"></div>
<div class="rh" style="top:403px">20</div>
<div class="abs" style="left:0;top:438px;width:25px;height:1px;background:#d4d4d4"></div>
<div class="rh" style="top:422px">21</div>
<div class="abs" style="left:0;top:456px;width:25px;height:1px;background:#d4d4d4"></div>
<div class="rh" style="top:440px">22</div>
<div class="abs" style="left:0;top:475px;width:25px;height:1px;background:#d4d4d4"></div>
<div class="rh" style="top:459px">23</div>
<div class="abs" style="left:0;top:493px;width:25px;height:1px;background:#d4d4d4"></div>
<div class="rh" style="top:477px">24</div>
<div class="abs" style="left:0;top:512px;width:25px;height:1px;background:#d4d4d4"></div>
<div class="rh" style="top:496px">25</div>
<div class="abs" style="left:0;top:531px;width:25px;height:1px;background:#d4d4d4"></div>
<div class="rh" style="top:515px">26</div>
<div class="abs" style="left:0;top:549px;width:25px;height:1px;background:#d4d4d4"></div>
<div class="rh" style="top:533px">27</div>
<div class="abs" style="left:0;top:567px;width:25px;height:1px;background:#d4d4d4"></div>
<div class="rh" style="top:551px">28</div>
<div class="abs" style="left:0;top:586px;width:25px;height:1px;background:#d4d4d4"></div>
<div class="rh" style="top:570px">29</div>
<div class="abs" style="left:0;top:605px;width:25px;height:1px;background:#d4d4d4"></div>
<div class="rh" style="top:589px">30</div>
<div class="rh" style="top:608px">31</div>
<div class="c b" style="left:28px;top:18px;letter-spacing:-0.26px"><u>Table 3 - Pro rating payment of unlawful ACT</u></div>
<div class="c b" style="left:28px;top:36px;transform:scaleX(0.867)"><u>Ryesekss PLC</u></div>
<div class="c b" style="left:28px;top:55px;transform:scaleX(0.875)">ACT Paid</div>
<div class="c" style="left:490px;top:36px;letter-spacing:0.24px">Amount of unlawful ACT paid and utilised and compound interest between date of payment and utilisation</div>
<div class="c" style="left:28px;top:110px;letter-spacing:0.25px">Financial Year</div>
<div class="c" style="left:112px;top:110px">Date</div>
<div class="c" style="left:189px;top:110px;letter-spacing:0.2px">Amount</div>
<div class="c" style="left:316px;top:110px">%</div>
<div class="c b" style="left:490px;top:74px;letter-spacing:-0.12px">Amount of unlawful</div>
<div class="c b" style="left:490px;top:92.5px;letter-spacing:-0.35px">ACT not utilised</div>
<div class="c b" style="left:490px;top:111px;letter-spacing:-0.35px">against unlawful DV</div>
<div class="c b" style="left:611px;top:92.5px;letter-spacing:-0.12px">Amount of unlawful</div>
<div class="c b" style="left:611px;top:111px;transform:scaleX(0.918)">ACT utilised</div>
<div class="c b" style="left:732px;top:110px;transform:scaleX(0.905)">Surplus</div>
<div class="c" style="left:853px;top:110px;letter-spacing:0.15px">FII Carryback</div>
<div class="c" style="left:938px;top:110px;letter-spacing:0.23px">Date paid</div>
<div class="c" style="left:1023.5px;top:92.5px">Date of</div>
<div class="c" style="left:1023.5px;top:111px;letter-spacing:0.78px">utilisation</div>
<div class="r n" style="right:1312.1px;top:128px">1973</div>
<div class="r n" style="right:1234.4px;top:128px">1<i>/</i>14<i>/</i>1973</div>
<div class="r" style="right:1126px;top:128px">-</div>
<div class="r" style="right:1048.8px;top:128px">0.00%</div>
<div class="r n" style="right:1312.1px;top:147px">1973</div>
<div class="r n" style="right:1234.4px;top:147px">7<i>/</i>14<i>/</i>1973</div>
<div class="r n" style="right:1111.2px;top:147px">94,630.00</div>
<div class="r" style="right:1048.8px;top:147px">100.00%</div>
<div class="r b" style="right:1234.6px;top:166px">Total</div>
<div class="r b n" style="right:1111.2px;top:166px">94,630.00</div>
<div class="r n" style="right:1312.1px;top:184px">1975</div>
<div class="r n" style="right:1234.4px;top:184px">7<i>/</i>14<i>/</i>1974</div>
<div class="r n" style="right:1111.2px;top:184px">422,398.00</div>
<div class="r" style="right:1048.8px;top:184px">32.43%</div>
<div class="r n" style="right:1312.1px;top:203px">1975</div>
<div class="r n" style="right:1234.4px;top:203px">10<i>/</i>14<i>/</i>1974</div>
<div class="r n" style="right:1111.2px;top:203px">457,790.00</div>
<div class="r" style="right:1048.8px;top:203px">35.14%</div>
<div class="r n" style="right:1312.1px;top:221px">1975</div>
<div class="r n" style="right:1234.4px;top:221px">4<i>/</i>14<i>/</i>1975</div>
<div class="r n" style="right:1111.2px;top:221px">422,398.00</div>
<div class="r" style="right:1048.8px;top:221px">32.43%</div>
<div class="r b" style="right:1234.6px;top:240px">Total</div>
<div class="r b n" style="right:1111.2px;top:240px">1,302,586.00</div>
<div class="r n" style="right:1312.1px;top:258px">1976</div>
<div class="r n" style="right:1234.4px;top:258px">7<i>/</i>14<i>/</i>1975</div>
<div class="r n" style="right:1111.2px;top:258px">3,769.00</div>
<div class="r" style="right:1048.8px;top:258px">0.32%</div>
<div class="r n" style="right:1312.1px;top:276px">1976</div>
<div class="r n" style="right:1234.4px;top:276px">10<i>/</i>14<i>/</i>1975</div>
<div class="r n" style="right:1111.2px;top:276px">821,345.00</div>
<div class="r" style="right:1048.8px;top:276px">70.27%</div>
<div class="r n" style="right:1312.1px;top:294px">1976</div>
<div class="r n" style="right:1234.4px;top:294px">1<i>/</i>14<i>/</i>1976</div>
<div class="r n" style="right:1111.2px;top:294px">3,769.00</div>
<div class="r" style="right:1048.8px;top:294px">0.32%</div>
<div class="r n" style="right:1312.1px;top:312px">1976</div>
<div class="r n" style="right:1234.4px;top:312px">4<i>/</i>14<i>/</i>1976</div>
<div class="r n" style="right:1111.2px;top:312px">340,024.00</div>
<div class="r" style="right:1048.8px;top:312px">29.09%</div>
<div class="r b" style="right:1234.6px;top:331px">Total</div>
<div class="r b n" style="right:1111.2px;top:331px">1,168,907.00</div>
<div class="r n" style="right:1312.1px;top:349px">1977</div>
<div class="r n" style="right:1234.4px;top:349px">7<i>/</i>14<i>/</i>1976</div>
<div class="r n" style="right:1107.4px;top:349px">(36,544.00)</div>
<div class="r" style="right:1048.8px;top:349px">-2.95%</div>
<div class="r n" style="right:1312.1px;top:367px">1977</div>
<div class="r n" style="right:1234.4px;top:367px">10<i>/</i>14<i>/</i>1976</div>
<div class="r n" style="right:1111.2px;top:367px">776,487.00</div>
<div class="r" style="right:1048.8px;top:367px">60.94%</div>
<div class="r n" style="right:1312.1px;top:385px">1977</div>
<div class="r n" style="right:1234.4px;top:385px">1<i>/</i>14<i>/</i>1977</div>
<div class="r n" style="right:1107.4px;top:385px">(269.00)</div>
<div class="r" style="right:1048.8px;top:385px">-0.02%</div>
<div class="r n" style="right:1312.1px;top:403px">1977</div>
<div class="r n" style="right:1234.4px;top:403px">4<i>/</i>14<i>/</i>1977</div>
<div class="r n" style="right:1111.2px;top:403px">497,594.00</div>
<div class="r" style="right:1048.8px;top:403px">39.06%</div>
<div class="r b" style="right:1234.6px;top:422px">Total</div>
<div class="r b n" style="right:1111.2px;top:422px">1,237,268.00</div>
<div class="r n" style="right:1312.1px;top:440px">1978</div>
<div class="r n" style="right:1234.4px;top:440px">7<i>/</i>14<i>/</i>1977</div>
<div class="r n" style="right:1107.2px;top:440px">3,606.00</div>
<div class="r" style="right:1048.8px;top:440px">0.27%</div>
<div class="r n" style="right:1312.1px;top:459px">1978</div>
<div class="r n" style="right:1234.4px;top:459px">10<i>/</i>14<i>/</i>1977</div>
<div class="r n" style="right:1111.2px;top:459px">833,799.00</div>
<div class="r" style="right:1048.8px;top:459px">61.80%</div>
<div class="r n" style="right:1312.1px;top:477px">1978</div>
<div class="r n" style="right:1234.4px;top:477px">1<i>/</i>14<i>/</i>1978</div>
<div class="r n" style="right:1107.4px;top:477px">(515.00)</div>
<div class="r" style="right:1048.8px;top:477px">-0.04%</div>
<div class="r n" style="right:1312.1px;top:496px">1978</div>
<div class="r n" style="right:1234.4px;top:496px">4<i>/</i>14<i>/</i>1978</div>
<div class="r n" style="right:1111.2px;top:496px">511,851.00</div>
<div class="r" style="right:1048.8px;top:496px">37.94%</div>
<div class="r b" style="right:1234.6px;top:515px">Total</div>
<div class="r b n" style="right:1111.2px;top:515px">1,348,741.00</div>
<div class="r n" style="right:1312.1px;top:533px">1979</div>
<div class="r n" style="right:1234.4px;top:533px">10<i>/</i>14<i>/</i>1978</div>
<div class="r n" style="right:1107.4px;top:533px">(125,752.00)</div>
<div class="r" style="right:1048.8px;top:533px">-8.89%</div>
<div class="r n" style="right:1312.1px;top:551px">1979</div>
<div class="r n" style="right:1234.4px;top:551px">1<i>/</i>14<i>/</i>1979</div>
<div class="r n" style="right:1107.2px;top:551px">1,017,291.00</div>
<div class="r" style="right:1048.8px;top:551px">66.08%</div>
<div class="r n" style="right:1312.1px;top:570px">1979</div>
<div class="r n" style="right:1234.4px;top:570px">4<i>/</i>14<i>/</i>1979</div>
<div class="r n" style="right:1111.2px;top:570px">522,239.00</div>
<div class="r" style="right:1048.8px;top:570px">33.92%</div>
<div class="r b" style="right:1234.6px;top:589px">Total</div>
<div class="r b n" style="right:1111.2px;top:589px">1,413,778.00</div>
<div class="r n" style="right:1312.1px;top:608px">1980</div>
<div class="r n" style="right:1234.4px;top:608px">10<i>/</i>14<i>/</i>1979</div>
<div class="r n" style="right:1107.4px;top:608px">(103,569.00)</div>
<div class="r" style="right:1048.8px;top:608px">-6.72%</div>
<div class="r" style="right:831px;top:128px">-</div>
<div class="r n" style="right:933.8px;top:147px">1</div>
<div class="r n" style="right:816.4px;top:147px">12,300.00</div>
<div class="r n" style="right:695.6px;top:147px">12,300.00</div>
<div class="r" style="right:589px;top:147px">-</div>
<div class="r n" style="right:400.8px;top:147px">7<i>/</i>14<i>/</i>1973</div>
<div class="r n" style="right:312.8px;top:147px">1<i>/</i>1<i>/</i>1985</div>
<div class="r n" style="right:933.8px;top:166px">2</div>
<div class="r n" style="right:816.4px;top:166px">49,337.15</div>
<div class="r n" style="right:695.6px;top:166px">49,337.15</div>
<div class="r" style="right:589px;top:166px">-</div>
<div class="r n" style="right:400.8px;top:166px">7<i>/</i>14<i>/</i>1974</div>
<div class="r n" style="right:312.8px;top:166px">1<i>/</i>1<i>/</i>1976</div>
<div class="r n" style="right:933.8px;top:184px">3</div>
<div class="r n" style="right:816.4px;top:184px">53,471.03</div>
<div class="r n" style="right:695.6px;top:184px">53,471.03</div>
<div class="r" style="right:589px;top:184px">-</div>
<div class="r n" style="right:400.8px;top:184px">10<i>/</i>14<i>/</i>1974</div>
<div class="r n" style="right:312.8px;top:184px">1<i>/</i>1<i>/</i>1976</div>
<div class="r n" style="right:933.8px;top:203px">4</div>
<div class="r n" style="right:816.4px;top:203px">49,337.15</div>
<div class="r n" style="right:695.6px;top:203px">49,337.15</div>
<div class="r" style="right:589px;top:203px">-</div>
<div class="r n" style="right:400.8px;top:203px">4<i>/</i>14<i>/</i>1975</div>
<div class="r n" style="right:312.8px;top:203px">1<i>/</i>1<i>/</i>1976</div>
<div class="r n" style="right:933.8px;top:221px">5</div>
<div class="r n" style="right:816.4px;top:221px">85.13</div>
<div class="r n" style="right:695.6px;top:221px">85.13</div>
<div class="r" style="right:589px;top:221px">-</div>
<div class="r n" style="right:400.8px;top:221px">7<i>/</i>14<i>/</i>1975</div>
<div class="r n" style="right:312.8px;top:221px">1<i>/</i>1<i>/</i>1977</div>
<div class="r n" style="right:933.8px;top:240px">6</div>
<div class="r n" style="right:816.4px;top:240px">248.81</div>
<div class="r n" style="right:695.6px;top:240px">248.81</div>
<div class="r" style="right:589px;top:240px">-</div>
<div class="r n" style="right:400.8px;top:240px">7<i>/</i>14<i>/</i>1975</div>
<div class="r n" style="right:312.8px;top:240px">1<i>/</i>1<i>/</i>1985</div>
<div class="r n" style="right:933.8px;top:258px">7</div>
<div class="r n" style="right:816.4px;top:258px">40.21</div>
<div class="r n" style="right:695.6px;top:258px">40.21</div>
<div class="r" style="right:589px;top:258px">-</div>
<div class="r n" style="right:400.8px;top:258px">7<i>/</i>14<i>/</i>1975</div>
<div class="r n" style="right:312.8px;top:258px">1<i>/</i>1<i>/</i>1986</div>
<div class="r n" style="right:933.8px;top:276px">8</div>
<div class="r n" style="right:816.4px;top:276px">18,552.66</div>
<div class="r n" style="right:695.6px;top:276px">18,552.66</div>
<div class="r" style="right:589px;top:276px">-</div>
<div class="r n" style="right:400.8px;top:276px">10<i>/</i>14<i>/</i>1975</div>
<div class="r n" style="right:312.8px;top:276px">1<i>/</i>1<i>/</i>1977</div>
<div class="r n" style="right:933.8px;top:294px">9</div>
<div class="r n" style="right:816.4px;top:294px">54,220.90</div>
<div class="r n" style="right:695.6px;top:294px">54,220.90</div>
<div class="r" style="right:589px;top:294px">-</div>
<div class="r n" style="right:400.8px;top:294px">10<i>/</i>14<i>/</i>1975</div>
<div class="r n" style="right:312.8px;top:294px">1<i>/</i>1<i>/</i>1985</div>
<div class="r n" style="right:933.8px;top:312px">10</div>
<div class="r n" style="right:816.4px;top:312px">8,762.66</div>
<div class="r n" style="right:695.6px;top:312px">8,762.66</div>
<div class="r" style="right:589px;top:312px">-</div>
<div class="r n" style="right:400.8px;top:312px">10<i>/</i>14<i>/</i>1975</div>
<div class="r n" style="right:312.8px;top:312px">1<i>/</i>1<i>/</i>1986</div>
<div class="r n" style="right:933.8px;top:331px">11</div>
<div class="r n" style="right:816.4px;top:331px">85.13</div>
<div class="r n" style="right:695.6px;top:331px">85.13</div>
<div class="r" style="right:589px;top:331px">-</div>
<div class="r n" style="right:400.8px;top:331px">1<i>/</i>14<i>/</i>1976</div>
<div class="r n" style="right:312.8px;top:331px">1<i>/</i>1<i>/</i>1977</div>
<div class="r n" style="right:933.8px;top:349px">12</div>
<div class="r n" style="right:816.4px;top:349px">248.81</div>
<div class="r n" style="right:695.6px;top:349px">248.81</div>
<div class="r" style="right:589px;top:349px">-</div>
<div class="r n" style="right:400.8px;top:349px">1<i>/</i>14<i>/</i>1976</div>
<div class="r n" style="right:312.8px;top:349px">1<i>/</i>1<i>/</i>1985</div>
<div class="r n" style="right:933.8px;top:367px">13</div>
<div class="r n" style="right:816.4px;top:367px">40.21</div>
<div class="r n" style="right:695.6px;top:367px">40.21</div>
<div class="r" style="right:589px;top:367px">-</div>
<div class="r n" style="right:400.8px;top:367px">1<i>/</i>14<i>/</i>1976</div>
<div class="r n" style="right:312.8px;top:367px">1<i>/</i>1<i>/</i>1986</div>
<div class="r n" style="right:933.8px;top:385px">14</div>
<div class="r n" style="right:816.4px;top:385px">7,680.51</div>
<div class="r n" style="right:695.6px;top:385px">7,680.51</div>
<div class="r" style="right:589px;top:385px">-</div>
<div class="r n" style="right:400.8px;top:385px">4<i>/</i>14<i>/</i>1976</div>
<div class="r n" style="right:312.8px;top:385px">1<i>/</i>1<i>/</i>1977</div>
<div class="r n" style="right:933.8px;top:403px">15</div>
<div class="r n" style="right:816.4px;top:403px">22,446.60</div>
<div class="r n" style="right:695.6px;top:403px">22,446.60</div>
<div class="r" style="right:589px;top:403px">-</div>
<div class="r n" style="right:400.8px;top:403px">4<i>/</i>14<i>/</i>1976</div>
<div class="r n" style="right:312.8px;top:403px">1<i>/</i>1<i>/</i>1985</div>
<div class="r n" style="right:933.8px;top:422px">16</div>
<div class="r n" style="right:816.4px;top:422px">3,627.60</div>
<div class="r n" style="right:695.6px;top:422px">3,627.60</div>
<div class="r" style="right:589px;top:422px">-</div>
<div class="r n" style="right:400.8px;top:422px">4<i>/</i>14<i>/</i>1976</div>
<div class="r n" style="right:312.8px;top:422px">1<i>/</i>1<i>/</i>1986</div>
<div class="r n" style="right:933.8px;top:440px">17</div>
<div class="r n" style="right:816.4px;top:440px">112,352.56</div>
<div class="r n" style="right:695.6px;top:440px">112,352.56</div>
<div class="r" style="right:589px;top:440px">-</div>
<div class="r n" style="right:400.8px;top:440px">10<i>/</i>14<i>/</i>1976</div>
<div class="r n" style="right:312.8px;top:440px">1<i>/</i>1<i>/</i>1978</div>
<div class="r n" style="right:933.8px;top:459px">18</div>
<div class="r n" style="right:816.4px;top:459px">71,998.58</div>
<div class="r n" style="right:695.6px;top:459px">71,998.58</div>
<div class="r" style="right:589px;top:459px">-</div>
<div class="r n" style="right:400.8px;top:459px">4<i>/</i>14<i>/</i>1977</div>
<div class="r n" style="right:312.8px;top:459px">1<i>/</i>1<i>/</i>1978</div>
<div class="r n" style="right:933.8px;top:477px">19</div>
<div class="r n" style="right:816.4px;top:477px">132,848.30</div>
<div class="r n" style="right:695.6px;top:477px">132,848.30</div>
<div class="r" style="right:589px;top:477px">-</div>
<div class="r n" style="right:400.8px;top:477px">1<i>/</i>14<i>/</i>1979</div>
<div class="r n" style="right:312.8px;top:477px">1<i>/</i>1<i>/</i>1980</div>
<div class="r n" style="right:933.8px;top:496px">20</div>
<div class="r n" style="right:816.4px;top:496px">68,199.33</div>
<div class="r n" style="right:695.6px;top:496px">68,199.33</div>
<div class="r" style="right:589px;top:496px">-</div>
<div class="r n" style="right:400.8px;top:496px">4<i>/</i>14<i>/</i>1979</div>
<div class="r n" style="right:312.8px;top:496px">1<i>/</i>1<i>/</i>1980</div>
<div class="r n" style="right:933.8px;top:515px">21</div>
<div class="r n" style="right:816.4px;top:515px">456,776.79</div>
<div class="r n" style="right:695.6px;top:515px">456,776.79</div>
<div class="r" style="right:589px;top:515px">-</div>
<div class="r n" style="right:400.8px;top:515px">1<i>/</i>14<i>/</i>1981</div>
<div class="r n" style="right:312.8px;top:515px">1<i>/</i>1<i>/</i>1986</div>
<div class="r n" style="right:933.8px;top:533px">22</div>
<div class="r n" style="right:816.4px;top:533px">107,093.85</div>
<div class="r n" style="right:695.6px;top:533px">107,093.85</div>
<div class="r" style="right:589px;top:533px">-</div>
<div class="r n" style="right:400.8px;top:533px">1<i>/</i>14<i>/</i>1981</div>
<div class="r n" style="right:312.8px;top:533px">1<i>/</i>1<i>/</i>1988</div>
<div class="r n" style="right:933.8px;top:551px">23</div>
<div class="r n" style="right:816.4px;top:551px">190,762.76</div>
<div class="r n" style="right:695.6px;top:551px">190,762.76</div>
<div class="r" style="right:589px;top:551px">-</div>
<div class="r n" style="right:400.8px;top:551px">4<i>/</i>14<i>/</i>1981</div>
<div class="r n" style="right:312.8px;top:551px">1<i>/</i>1<i>/</i>1986</div>
<div class="r n" style="right:933.8px;top:570px">24</div>
<div class="r n" style="right:816.4px;top:570px">44,725.39</div>
<div class="r n" style="right:695.6px;top:570px">44,725.39</div>
<div class="r" style="right:589px;top:570px">-</div>
<div class="r n" style="right:400.8px;top:570px">4<i>/</i>14<i>/</i>1981</div>
<div class="r n" style="right:312.8px;top:570px">1<i>/</i>1<i>/</i>1988</div>
<div class="r n" style="right:933.8px;top:589px">25</div>
<div class="r n" style="right:816.4px;top:589px">191,524.93</div>
<div class="r n" style="right:695.6px;top:589px">191,288.70</div>
<div class="r n" style="right:575.4px;top:589px">236.23</div>
<div class="r n" style="right:400.8px;top:589px">1<i>/</i>14<i>/</i>1982</div>
<div class="r n" style="right:312.8px;top:589px">1<i>/</i>1<i>/</i>1988</div>
<div class="r n" style="right:933.8px;top:608px">26</div>
<div class="r n" style="right:816.4px;top:608px">72,172.13</div>
<div class="r n" style="right:695.6px;top:608px">72,083.11</div>
<div class="r n" style="right:575.4px;top:608px">89.02</div>
<div class="r n" style="right:400.8px;top:608px">4<i>/</i>14<i>/</i>1982</div>
<div class="r n" style="right:312.8px;top:608px">1<i>/</i>1<i>/</i>1988</div>
<div class="th" style="left:26px;width:346px;top:70px"></div>
<div class="th" style="left:26px;width:346px;top:125px"></div>
<div class="th" style="left:26px;width:346px;top:181px"></div>
<div class="th" style="left:26px;width:346px;top:255px"></div>
<div class="th" style="left:26px;width:346px;top:346px"></div>
<div class="th" style="left:26px;width:346px;top:437px"></div>
<div class="th" style="left:26px;width:346px;top:530px"></div>
<div class="th" style="left:26px;width:346px;top:604px"></div>
<div class="tv" style="left:370px;top:70px;height:552px"></div>
<div class="th" style="left:486px;width:623px;top:70px"></div>
<div class="th" style="left:486px;width:623px;top:125px"></div>
<div class="th" style="left:486px;width:623px;top:162px"></div>
<div class="th" style="left:486px;width:623px;top:218px"></div>
<div class="th" style="left:486px;width:623px;top:437px"></div>
<div class="th" style="left:486px;width:623px;top:474px"></div>
<div class="th" style="left:486px;width:623px;top:511px"></div>
<div class="th" style="left:486px;width:623px;top:585px"></div>
<div class="tv" style="left:486px;top:70px;height:552px"></div>
<div class="tv" style="left:1107px;top:70px;height:552px"></div>
<div class="tv" style="left:607px;top:70px;height:57px"></div>
<div class="abs" style="left:24px;top:255px;width:87px;height:21px;border:2px solid #217346"></div>
<div class="abs" style="left:106px;top:271px;width:7px;height:7px;background:#217346;border:1px solid #fff"></div>
</div>
<!-- vertical scrollbar -->
<div class="abs" style="left:1419px;top:189px;width:21px;height:622px;background:#fff"></div>
<div class="abs" style="left:1418px;top:204px;width:1px;height:607px;background:#ababab"></div>
<div class="abs" style="left:1422px;top:205px;width:15px;height:593px;background:#f0f0f0"></div>
<div class="abs" style="left:1422px;top:192px;width:15px;height:13px;border:1px solid #ababab;background:#fff"></div>
<svg style="left:1426px;top:196px" width="7" height="4" viewBox="0 0 7 4"><path d="M0 4H7L3.5 0Z" fill="#777"/></svg>
<div class="abs" style="left:1422px;top:206px;width:15px;height:209px;border:1px solid #ababab;background:#fff"></div>
<div class="abs" style="left:1422px;top:797px;width:15px;height:14px;border:1px solid #ababab;background:#fff"></div>
<svg style="left:1426px;top:802px" width="7" height="4" viewBox="0 0 7 4"><path d="M0 0H7L3.5 4Z" fill="#777"/></svg>
<!-- ===== sheet tab bar ===== -->
<div class="abs" style="left:0;top:811px;width:1440px;height:27px;background:#f5f5f5"></div>
<div class="abs" style="left:0;top:835px;width:1440px;height:3px;background:#fcfcfc"></div>
<div class="abs" style="left:0;top:810px;width:1419px;height:1px;background:#ababab"></div>
<svg style="left:26px;top:819px" width="5" height="9" viewBox="0 0 5 9"><path d="M5 0V9L0 4.5Z" fill="#cdcdcd"/></svg>
<svg style="left:55px;top:819px" width="5" height="9" viewBox="0 0 5 9"><path d="M0 0V9L5 4.5Z" fill="#cdcdcd"/></svg>
<div class="abs" style="left:100px;top:814px;width:1px;height:20px;background:#ababab"></div>
<div class="abs" style="left:300px;top:814px;width:1px;height:20px;background:#ababab"></div>
<div class="abs" style="left:615px;top:814px;width:1px;height:20px;background:#ababab"></div>
<div class="abs" style="left:388px;top:811px;width:127px;height:24px;background:#fff;border-left:1px solid #ababab;border-right:1px solid #ababab;border-bottom:2px solid #217346"></div>
<div class="t" style="left:100px;width:200px;top:816px;text-align:center;font-size:12.7px;color:#444">Unlawful ACT v unlawful DV</div>
<div class="t" style="left:300px;width:88px;top:816px;text-align:center;font-size:12.7px;color:#444">Utilisation</div>
<div class="t" style="left:388px;width:127px;top:816px;text-align:center;font-size:13px;color:#217346;font-weight:bold">Payment dates 2</div>
<div class="t" style="left:515px;width:100px;top:816px;text-align:center;font-size:12.7px;color:#444">Unlawful DV</div>
<svg style="left:648px;top:815.500px" width="17" height="17" viewBox="0 0 17 17"><circle cx="8.5" cy="8.5" r="7.6" fill="none" stroke="#777" stroke-width="1.1"/><path d="M8.5 4.5V12.5M4.5 8.5H12.5" stroke="#666" stroke-width="1.6"/></svg>
<div class="abs" style="left:864px;top:819.500px;width:1.500px;height:1.500px;background:#a0a0a0;box-shadow:0 4px 0 #a0a0a0,0 8px 0 #a0a0a0"></div>
<!-- horizontal scrollbar -->
<div class="abs" style="left:881px;top:817px;width:537px;height:15px;background:#f0f0f0"></div>
<div class="abs" style="left:881px;top:817px;width:15px;height:15px;border:1px solid #ababab;background:#fff"></div>
<svg style="left:886px;top:821px" width="4" height="7" viewBox="0 0 4 7"><path d="M4 0V7L0 3.5Z" fill="#777"/></svg>
<div class="abs" style="left:896px;top:817px;width:476px;height:15px;border:1px solid #ababab;background:#fff"></div>
<div class="abs" style="left:1404px;top:817px;width:15px;height:15px;border:1px solid #ababab;background:#fff"></div>
<svg style="left:1410px;top:821px" width="4" height="7" viewBox="0 0 4 7"><path d="M0 0V7L4 3.5Z" fill="#777"/></svg>
<!-- ===== status bar ===== -->
<div class="abs" style="left:0;top:838px;width:1440px;height:22px;background:#217346"></div>
<div class="t" style="left:7.5px;top:841px;font-size:11px;color:#fff;transform:scaleX(.88);transform-origin:0 50%">READY</div>
<svg style="left:1166px;top:842px" width="13" height="13" viewBox="0 0 13 13"><rect x=".5" y=".5" width="12" height="12" fill="none" stroke="#fff"/><path d="M.5 4.5H12.5M.5 8.5H12.5M4.5 .5V12.5M8.5 .5V12.5" stroke="#fff"/></svg>
<svg style="left:1204px;top:842px" width="14" height="13" viewBox="0 0 14 13"><rect x=".5" y=".5" width="13" height="12" fill="none" stroke="#e4efe8"/><rect x="3.5" y="3.5" width="7" height="6" fill="none" stroke="#e4efe8"/><path d="M5 5.5H9M5 7.500H9" stroke="#e4efe8" stroke-width=".8"/></svg>
<svg style="left:1242px;top:842px" width="14" height="13" viewBox="0 0 14 13"><rect x=".5" y=".5" width="13" height="12" fill="none" stroke="#e4efe8"/><rect x="2" y="1" width="3.500" height="6" fill="#e4efe8"/><rect x="6.500" y="1" width="3" height="6" fill="#e4efe8"/></svg>
<div class="abs" style="left:1273px;top:848px;width:6px;height:1.5px;background:#175c35"></div>
<div class="abs" style="left:1283px;top:848px;width:100px;height:1px;background:#e9f2ec"></div>
<div class="abs" style="left:1333px;top:844px;width:1.5px;height:9px;background:#e9f2ec"></div>
<div class="abs" style="left:1386px;top:848px;width:9px;height:1.5px;background:#175c35"></div>
<div class="abs" style="left:1390px;top:844px;width:1.5px;height:9px;background:#175c35"></div>
<div class="t" style="left:1409px;top:841px;font-size:11px;color:#8fd0a9">90%</div>
<!-- ===== taskbar ===== -->
<div class="abs" style="left:0;top:860px;width:1440px;height:40px;background:linear-gradient(90deg,#8d9fba 0,#8a9dba 50px,#a8c0dc 82px,#a9c1dd 1235px,#8095b2 1272px,#7b8da9 1300px,#7b8da9 1440px)"></div>
<div class="abs" style="left:0;top:860px;width:1440px;height:1px;background:#4f6b74"></div>
<div class="abs" style="left:0;top:861px;width:1440px;height:1px;background:rgba(255,255,255,.38)"></div>
<!-- start orb -->
<svg style="left:9px;top:862px" width="36" height="37" viewBox="0 0 36 37">
  <defs>
    <linearGradient id="orb" x1="0" y1="0" x2="0" y2="1"><stop offset="0" stop-color="#c3d6e6"/><stop offset=".3" stop-color="#6d9cc4"/><stop offset=".5" stop-color="#1c5c9c"/><stop offset=".72" stop-color="#1173bd"/><stop offset=".9" stop-color="#25b4ea"/><stop offset="1" stop-color="#5fdcf7"/></linearGradient>
    <radialGradient id="orbg" cx="50%" cy="50%" r="50%"><stop offset=".86" stop-color="#fff" stop-opacity="0"/><stop offset=".93" stop-color="#fff" stop-opacity=".45"/><stop offset="1" stop-color="#fff" stop-opacity="0"/></radialGradient>
  </defs>
  <circle cx="18" cy="18.500" r="18.500" fill="url(#orbg)"/>
  <circle cx="18" cy="18.500" r="16.800" fill="url(#orb)" stroke="#1f426b" stroke-width="1"/>
  <path d="M9.800 9.500C13 7.600 15.500 7.600 18.300 9.300L16.900 16.300C14.500 14.800 12 14.800 8.500 16.500Z" fill="#ee5a24"/>
  <path d="M19.500 10C22.300 11.600 25 11.600 28.300 9.800L26.900 16.900C23.500 18.700 21 18.700 18.100 17.100Z" fill="#8cc63f"/>
  <path d="M8.200 18C11.500 16.400 14 16.400 16.600 18L15.200 25C12.600 23.500 10.200 23.500 6.900 25.100Z" fill="#3aa9ea"/>
  <path d="M17.900 18.700C20.700 20.300 23.300 20.300 26.600 18.500L25.200 25.500C21.800 27.300 19.300 27.300 16.500 25.800Z" fill="#fbc531"/>
  <path d="M2.500 14C5 5.500 11 2.500 18 2.500S31 5.500 33.500 14C27 10.500 9 10.500 2.500 14Z" fill="#fff" opacity=".28"/>
</svg>
<!-- IE -->
<svg style="left:74.500px;top:862.500px" width="32" height="33" viewBox="0 0 32 33">
  <defs><linearGradient id="ieb" x1="0" y1="0" x2="0" y2="1"><stop offset="0" stop-color="#7fd2f7"/><stop offset="1" stop-color="#1b8fd6"/></linearGradient></defs>
  <path d="M16.500 5.500C23 5.500 28.500 10.500 28.500 18.500H11.500C11.800 22 14 24 17 24C19.300 24 21 23 22 21.500H28C26.500 26.500 22 29.800 16.500 29.800C9.500 29.800 4.500 24.500 4.500 17.700C4.500 10.800 9.500 5.500 16.500 5.500ZM11.600 14.500H21.800C21.300 11.800 19.300 10.500 16.700 10.500C14.100 10.500 12.200 12 11.600 14.500Z" fill="url(#ieb)" stroke="#2a8fd0" stroke-width=".6"/>
  <path d="M2.500 30.500C-1 26 6 13 17 6.500C23 3 29.500 1.500 30.500 4.500C31 6.500 29.500 9 28.500 10.500C29.500 7.500 29 5.500 26.500 5.500C22 5.500 13 11.500 8 19C4.500 24.500 3.500 29 5.500 30C7 30.700 9 30 11 29C7.500 31.500 4 32.500 2.500 30.500Z" fill="#f4c83a" stroke="#d9a514" stroke-width=".5"/>
</svg>
<!-- Explorer -->
<svg style="left:135px;top:866px" width="34" height="30" viewBox="0 0 34 30">
  <path d="M1.500 3.500C1.500 2.500 2.200 1.500 3.500 1.500H13L16 4.500H30.500C31.800 4.500 32.500 5.300 32.500 6.500V24.500H1.500Z" fill="#f6d67a" stroke="#d0a748" stroke-width="1"/>
  <rect x="4" y="2.800" width="3" height="2" fill="#3aa655"/><rect x="12" y="4.800" width="3.200" height="2.200" fill="#e0483c"/><rect x="20" y="6.800" width="6" height="2.600" fill="#fff" stroke="#58a6d8" stroke-width=".6"/>
  <path d="M1.500 9.500H32.500V25.500H1.500Z" fill="#f9e29c" stroke="#d9b55a" stroke-width="1"/>
  <path d="M6.500 29V19C6.500 17.500 7.500 16.500 9 16.500H25C26.500 16.500 27.500 17.500 27.500 19V29H21.500V22H12.500V29Z" fill="#9bd0ee" stroke="#4f9bcb" stroke-width="1"/>
  <path d="M7.500 19.500C7.500 18.300 8.300 17.500 9.500 17.500H24.500C25.700 17.500 26.500 18.300 26.500 19.500V21H7.500Z" fill="#d5eefb" opacity=".8"/>
</svg>
<!-- WMP -->
<svg style="left:198px;top:868px" width="29" height="27" viewBox="0 0 29 27">
  <rect x="6" y="2.500" width="21" height="20.500" fill="#d3e9f8" stroke="#8dbde0" stroke-width=".8"/>
  <rect x="4" y="2.500" width="21" height="21.500" fill="#bfdff5" stroke="#7fb4dc" stroke-width=".8"/>
  <rect x="1.500" y="1.500" width="21" height="22.500" fill="#a6d2f1" stroke="#5fa2d2" stroke-width=".9"/>
  <circle cx="12" cy="12.700" r="8.600" fill="#f08a1c" stroke="#f9c07a" stroke-width="1"/>
  <path d="M9.200 7.800L17.800 12.700L9.200 17.600Z" fill="#fff"/>
</svg>
<!-- Firefox -->
<svg style="left:260px;top:863px" width="32" height="33" viewBox="0 0 32 33">
  <defs><radialGradient id="ffg" cx="70%" cy="15%" r="95%"><stop offset="0" stop-color="#ffe93a"/><stop offset=".35" stop-color="#ff9a1f"/><stop offset=".75" stop-color="#f4352b"/><stop offset="1" stop-color="#d0185e"/></radialGradient></defs>
  <path d="M21 1C25 4 27 6.500 27.500 9.500C30.500 12 31.500 16 31 19.500C30 27 23.500 32 16 32C7.500 32 1 25.500 1 17.500C1 14 2 10.500 4 8.500C4 6.500 4.500 5 5.500 4C6 6 7 7.500 8.500 8C11 5 14.500 4.500 17.500 5.500C18 3.500 19.500 2 21 1Z" fill="url(#ffg)"/>
  <path d="M9 12.500C11 10.500 15 10 18 11.500C21 13 22.500 15.500 22.500 18.500C22.500 22.500 19.500 25.500 15.500 25.500C11.500 25.500 8.500 22.800 8.500 19C8.500 17.800 9 16.500 10 15.800C11.500 16.500 13 16.300 14.500 15.500C13 15 12.500 14 12.500 13C11.500 12.500 10.200 12.300 9 12.500Z" fill="#5a3fc4"/>
  <path d="M13 17C15 15.500 18.500 16 19.500 18.500C20.300 20.500 19 23 16.500 23.500C14 24 11.500 22.500 11.500 20C11.500 19 12 18 13 17Z" fill="#2f6fe0"/>
  <path d="M22 3.500C26 6.500 28 9 29 13C30.500 19 28.500 25 24.500 28.500C27.500 24 28 18 25 13.500C24.500 10 23.500 6.500 22 3.500Z" fill="#ffd43a" opacity=".9"/>
</svg>
<!-- Chrome -->
<svg style="left:321px;top:864px" width="32" height="32" viewBox="0 0 32 32">
  <circle cx="16" cy="16" r="15.300" fill="#fff"/>
  <path d="M16 16L2.750 8.350A15.300 15.300 0 0 1 29.250 8.350Z" fill="#e33b2e"/>
  <path d="M16 16L29.250 8.350A15.300 15.300 0 0 1 16 31.300Z" fill="#fdd231"/>
  <path d="M16 16L16 31.300A15.300 15.300 0 0 1 2.750 8.350Z" fill="#2da94f"/>
  <path d="M16 8.500H29.300A15.300 15.300 0 0 0 2.750 8.350L9.500 19.750Z" fill="#e33b2e"/>
  <path d="M22.500 19.750L16 31.300A15.300 15.300 0 0 0 29.300 8.500H16Z" fill="#fdd231"/>
  <path d="M9.500 19.750L2.750 8.350A15.300 15.300 0 0 0 16 31.300L22.500 19.750Z" fill="#2da94f"/>
  <circle cx="16" cy="16" r="7.300" fill="#fff"/><circle cx="16" cy="16" r="5.800" fill="#4a86e8"/>
</svg>
<!-- Edge -->
<svg style="left:382px;top:863px" width="34" height="33" viewBox="0 0 34 33">
  <defs>
    <linearGradient id="edg1" x1="0" y1="0" x2="1" y2="1"><stop offset="0" stop-color="#35c1f1"/><stop offset="1" stop-color="#1a5fb8"/></linearGradient>
    <linearGradient id="edg2" x1="0" y1="0" x2="1" y2="0"><stop offset="0" stop-color="#2fbfe6"/><stop offset=".6" stop-color="#4fd67a"/><stop offset="1" stop-color="#7ee04f"/></linearGradient>
  </defs>
  <circle cx="17" cy="16.500" r="15.800" fill="url(#edg1)"/>
  <path d="M3 10C7 2 17 -1 25 3C31 6 34 12 32.500 17.500C31.500 21 28 22.500 24.500 22.500C21 22.500 19 21 19.500 19C20.500 17 21 15.500 19.500 13C17 9.500 9 8 3 10Z" fill="url(#edg2)"/>
  <path d="M8 17C8 12 12.500 10 16 11C13.500 12.500 12.500 15.500 13.500 18.500C15 23 20 25.500 26 24.500C28 24 29.500 23.500 30.500 23C27.500 29 21 32.500 14.500 32C7 30.500 3 24 8 17Z" fill="#1553a8"/>
  <path d="M1.500 14.500C1 21 4.500 28.500 12 31.500C8.500 28 7.500 23 9.500 19C10.500 16.500 13 14 16 13.500C12 11.500 5 11.500 1.500 14.500Z" fill="#2b8fe0" opacity=".85"/>
</svg>
<!-- Excel taskbar button -->
<div class="abs" style="left:431px;top:861px;width:60px;height:39px;border:1px solid #5d6f8a;border-bottom:none;border-radius:3px 3px 0 0;background:linear-gradient(180deg,#e9eef5 0,#d3deeb 48%,#c1cfe0 52%,#d6e0ec 100%);box-shadow:inset 0 0 0 1px rgba(255,255,255,.7)"></div>
<svg style="left:445px;top:864px" width="32" height="32" viewBox="0 0 32 32">
  <rect x="17" y="4" width="14" height="24" fill="#fff" stroke="#1e7145" stroke-width="1.400"/>
  <g stroke="#1e7145" stroke-width="1.800"><path d="M19 8H29.500M19 12H29.500M19 16H29.500M19 20H29.500M19 24H29.500"/></g><path d="M24.200 5V27" stroke="#fff" stroke-width="1.300"/>
  <path d="M0 3.500L19.500 0V32L0 28.500Z" fill="#1e7145"/>
  <path d="M5 9.500L14 22.500M14 9.500L5 22.500" stroke="#fff" stroke-width="2.800"/>
</svg>
<!-- tray -->
<svg style="left:1286px;top:878.500px" width="9" height="5" viewBox="0 0 9 5"><path d="M0 5H9L4.500 0Z" fill="#fff"/></svg>
<svg style="left:1306px;top:872px" width="18" height="16" viewBox="0 0 18 16">
  <path d="M1 5.500H4L8.500 1.500V14.500L4 10.500H1Z" fill="#fff" stroke="#555" stroke-width=".6"/>
  <path d="M10.800 5C12 6.500 12 9.500 10.800 11M12.800 3.300C15 5.500 15 10.500 12.800 12.700M14.800 1.800C17.800 5 17.800 11 14.800 14.200" fill="none" stroke="#fff" stroke-width="1.100"/>
</svg>
<svg style="left:1331px;top:871px" width="17" height="18" viewBox="0 0 17 18">
  <rect x="4.500" y="4.500" width="11" height="8.500" fill="#5f6f88" stroke="#fff" stroke-width="1.300"/>
  <path d="M10 13V15.500M6.500 16H13.500" stroke="#fff" stroke-width="1.300"/>
  <path d="M2 1V4M4.500 1V4M.8 4H5.700V7.500H.8ZM3.200 7.500V14H6" fill="none" stroke="#fff" stroke-width="1.100"/>
</svg>
<div class="t" style="left:1352px;width:74px;top:865px;text-align:center;font-size:12px;color:#fff;letter-spacing:-.1px">3:24 AM</div>
<div class="t" style="left:1352px;width:74px;top:882.500px;text-align:center;font-size:12px;color:#fff;letter-spacing:-.1px">4/14/2026</div>
<div class="abs" style="left:1427px;top:861px;width:13px;height:39px;background:linear-gradient(90deg,#59606b,#8a96a8 50%,#6e7888);border-left:1px solid #3e4653"></div>
</body>
</html>
